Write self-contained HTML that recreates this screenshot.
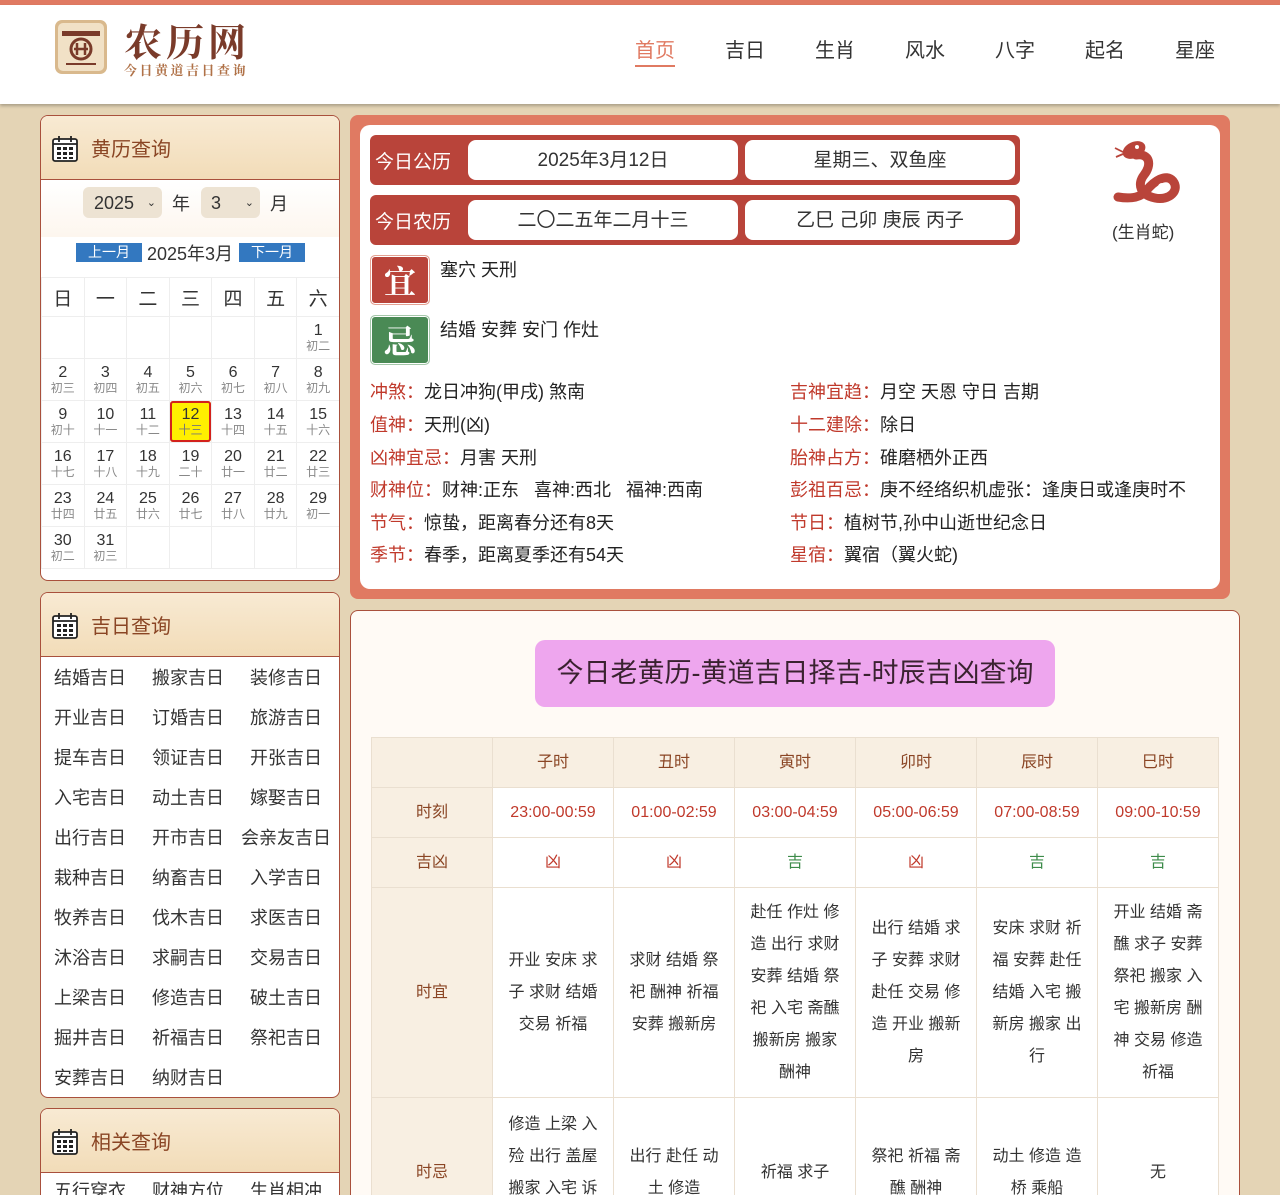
<!DOCTYPE html>
<html style="width:1280px;height:1195px;overflow:hidden"><head><meta charset="utf-8">
<style>
*{box-sizing:border-box;margin:0;padding:0}
body{width:1280px;height:1195px;overflow:hidden;background:#e4d4b5;font-family:"Liberation Sans","Noto Sans CJK SC",sans-serif;color:#333;position:relative}
.abs{position:absolute}
#top{left:0;top:0;width:1280px;height:5px;background:#e07a62}
#hdr{left:0;top:5px;width:1280px;height:99px;background:#fff;box-shadow:0 2px 3px rgba(0,0,0,.25)}
.nav{position:absolute;top:34px;font-size:20px;color:#333}
.box{position:absolute;left:40px;width:300px;background:#fff;border:1px solid #a9503c;border-radius:8px;overflow:hidden}
.bh{height:64px;background:linear-gradient(#f8ead3,#f2dcb8);border-bottom:1px solid #a9503c;position:relative}
.bh span{position:absolute;left:50px;top:17px;font-size:20px;color:#8a4524}
.ico{position:absolute;left:11px;top:20px;width:26px;height:26px}
.cal{position:absolute;left:0;top:161px;border-collapse:separate;border-spacing:1px;width:299px}
.cal td{width:41px;height:41px;background:#fff;text-align:center;vertical-align:middle;font-size:16px;line-height:16px;box-shadow:0 0 0 1px #eee}
.cal td small{display:block;font-size:12px;color:#888;line-height:14px}
.cal th{height:38px;font-weight:normal;font-size:19px;box-shadow:0 0 0 1px #eee}
.links{position:absolute;left:0;top:64px;width:300px}
.links div{height:40px;display:flex;align-items:center;font-size:18px;color:#333}
.links span{width:98px;text-align:center}
.bar{position:absolute;left:370px;width:650px;height:50px;background:#b9443a;border-radius:6px}
.bar b{position:absolute;left:5px;top:12px;font-weight:normal;color:#fff;font-size:19px}
.pill{position:absolute;top:5px;height:40px;width:270px;background:#fff;border-radius:8px;text-align:center;line-height:42px;font-size:19px}
.inf{position:absolute;font-size:18px;color:#222;white-space:nowrap}
.inf i{font-style:normal;color:#c0392b}
table.t{position:absolute;left:371px;top:737px;border-collapse:collapse;width:848px;font-size:16px}
.t td{border:1px solid #eadfd0;text-align:center;width:121px;padding:0 13px;color:#333;line-height:32px;background:#fff}
.t tr td:first-child{background:#f8efe2;color:#8a4524}
.t tr:first-child td{background:#f8efe2;color:#8a4524}
.r{color:#c0392b!important}.g{color:#3d8b4a!important}
</style></head><body>
<div class="abs" id="top"></div>
<div class="abs" id="hdr"></div>
<svg class="abs" style="left:54px;top:19px" width="54" height="56" viewBox="0 0 54 56">
<rect x="1" y="1" width="52" height="54" rx="7" fill="#d9b98d"/><rect x="4" y="4" width="46" height="48" rx="5" fill="#f1e1c6"/>
<rect x="8" y="12" width="38" height="5" fill="#7a3b2a"/><circle cx="27" cy="30" r="10" fill="none" stroke="#7a3b2a" stroke-width="3"/>
<path d="M23 24v12M31 24v12M20 30h14" stroke="#7a3b2a" stroke-width="2.5"/><rect x="12" y="44" width="30" height="2" fill="#7a3b2a"/></svg>
<div class="abs" style="left:124px;top:12px;font-size:38px;color:#7a3b2a;font-family:'Noto Serif CJK SC',serif;font-weight:bold;letter-spacing:4px">农历网</div>
<div class="abs" style="left:124px;top:60px;font-size:13px;color:#b07248;font-family:'Noto Serif CJK SC',serif;font-weight:bold;letter-spacing:2.5px">今日黄道吉日查询</div>
<div class="nav" style="left:635px;color:#e07a62">首页<div style="height:2px;background:#e07a62;margin-top:2px"></div></div>
<div class="nav" style="left:725px">吉日</div><div class="nav" style="left:815px">生肖</div><div class="nav" style="left:905px">风水</div><div class="nav" style="left:995px">八字</div><div class="nav" style="left:1085px">起名</div><div class="nav" style="left:1175px">星座</div>

<!-- box 1 -->
<div class="box" style="top:115px;height:466px">
<div class="bh"><svg class="ico" viewBox="0 0 26 26"><rect x="1" y="3" width="24" height="22" rx="2" fill="#fff" stroke="#222" stroke-width="1.8"/><path d="M7 0v6M19 0v6M1 8h24" stroke="#222" stroke-width="1.8"/><g fill="#222"><rect x="5" y="11" width="4" height="3"/><rect x="11" y="11" width="4" height="3"/><rect x="17" y="11" width="4" height="3"/><rect x="5" y="16" width="4" height="3"/><rect x="11" y="16" width="4" height="3"/><rect x="17" y="16" width="4" height="3"/><rect x="5" y="21" width="4" height="2"/><rect x="11" y="21" width="4" height="2"/><rect x="17" y="21" width="4" height="2"/></g></svg><span>黄历查询</span></div>
<div style="position:absolute;top:65px;left:0;width:300px;height:56px;background:linear-gradient(#fff,#fdf6ee)"></div>
<div style="position:absolute;left:42px;top:71px;width:79px;height:31px;background:#ede3d3;border-radius:6px;font-size:18px;line-height:33px;padding-left:11px">2025<span style="position:absolute;right:6px;font-size:11px">⌄</span></div>
<div style="position:absolute;left:131px;top:74px;font-size:18px">年</div>
<div style="position:absolute;left:160px;top:71px;width:59px;height:31px;background:#ede3d3;border-radius:6px;font-size:18px;line-height:33px;padding-left:10px">3<span style="position:absolute;right:6px;font-size:11px">⌄</span></div>
<div style="position:absolute;left:229px;top:74px;font-size:18px">月</div>
<div style="position:absolute;left:35px;top:127px;width:66px;height:19px;background:#3378c0;color:#fff;font-size:14px;text-align:center;line-height:19px">上一月</div>
<div style="position:absolute;left:106px;top:124px;font-size:18px">2025年3月</div>
<div style="position:absolute;left:198px;top:127px;width:66px;height:19px;background:#3378c0;color:#fff;font-size:14px;text-align:center;line-height:19px">下一月</div>
<table class="cal">
<tr><th>日</th><th>一</th><th>二</th><th>三</th><th>四</th><th>五</th><th>六</th></tr>
<tr><td></td><td></td><td></td><td></td><td></td><td></td><td>1<small>初二</small></td></tr>
<tr><td>2<small>初三</small></td><td>3<small>初四</small></td><td>4<small>初五</small></td><td>5<small>初六</small></td><td>6<small>初七</small></td><td>7<small>初八</small></td><td>8<small>初九</small></td></tr>
<tr><td>9<small>初十</small></td><td>10<small>十一</small></td><td>11<small>十二</small></td><td style="background:#ffef00;box-shadow:inset 0 0 0 2px #d3211c;border-radius:3px">12<small style="color:#777">十三</small></td><td>13<small>十四</small></td><td>14<small>十五</small></td><td>15<small>十六</small></td></tr>
<tr><td>16<small>十七</small></td><td>17<small>十八</small></td><td>18<small>十九</small></td><td>19<small>二十</small></td><td>20<small>廿一</small></td><td>21<small>廿二</small></td><td>22<small>廿三</small></td></tr>
<tr><td>23<small>廿四</small></td><td>24<small>廿五</small></td><td>25<small>廿六</small></td><td>26<small>廿七</small></td><td>27<small>廿八</small></td><td>28<small>廿九</small></td><td>29<small>初一</small></td></tr>
<tr><td>30<small>初二</small></td><td>31<small>初三</small></td><td></td><td></td><td></td><td></td><td></td></tr>
</table>
</div>

<!-- box 2 -->
<div class="box" style="top:592px;height:506px">
<div class="bh"><svg class="ico" viewBox="0 0 26 26"><rect x="1" y="3" width="24" height="22" rx="2" fill="#fff" stroke="#222" stroke-width="1.8"/><path d="M7 0v6M19 0v6M1 8h24" stroke="#222" stroke-width="1.8"/><g fill="#222"><rect x="5" y="11" width="4" height="3"/><rect x="11" y="11" width="4" height="3"/><rect x="17" y="11" width="4" height="3"/><rect x="5" y="16" width="4" height="3"/><rect x="11" y="16" width="4" height="3"/><rect x="17" y="16" width="4" height="3"/><rect x="5" y="21" width="4" height="2"/><rect x="11" y="21" width="4" height="2"/><rect x="17" y="21" width="4" height="2"/></g></svg><span>吉日查询</span></div>
<div class="links">
<div><span>结婚吉日</span><span>搬家吉日</span><span>装修吉日</span></div>
<div><span>开业吉日</span><span>订婚吉日</span><span>旅游吉日</span></div>
<div><span>提车吉日</span><span>领证吉日</span><span>开张吉日</span></div>
<div><span>入宅吉日</span><span>动土吉日</span><span>嫁娶吉日</span></div>
<div><span>出行吉日</span><span>开市吉日</span><span>会亲友吉日</span></div>
<div><span>栽种吉日</span><span>纳畜吉日</span><span>入学吉日</span></div>
<div><span>牧养吉日</span><span>伐木吉日</span><span>求医吉日</span></div>
<div><span>沐浴吉日</span><span>求嗣吉日</span><span>交易吉日</span></div>
<div><span>上梁吉日</span><span>修造吉日</span><span>破土吉日</span></div>
<div><span>掘井吉日</span><span>祈福吉日</span><span>祭祀吉日</span></div>
<div><span>安葬吉日</span><span>纳财吉日</span><span></span></div>
</div></div>

<!-- box 3 -->
<div class="box" style="top:1108px;height:120px">
<div class="bh"><svg class="ico" viewBox="0 0 26 26"><rect x="1" y="3" width="24" height="22" rx="2" fill="#fff" stroke="#222" stroke-width="1.8"/><path d="M7 0v6M19 0v6M1 8h24" stroke="#222" stroke-width="1.8"/><g fill="#222"><rect x="5" y="11" width="4" height="3"/><rect x="11" y="11" width="4" height="3"/><rect x="17" y="11" width="4" height="3"/><rect x="5" y="16" width="4" height="3"/><rect x="11" y="16" width="4" height="3"/><rect x="17" y="16" width="4" height="3"/><rect x="5" y="21" width="4" height="2"/><rect x="11" y="21" width="4" height="2"/><rect x="17" y="21" width="4" height="2"/></g></svg><span>相关查询</span></div>
<div class="links" style="top:66px"><div style="height:30px"><span>五行穿衣</span><span>财神方位</span><span>生肖相冲</span></div></div>
</div>

<!-- top right panel -->
<div class="abs" style="left:350px;top:115px;width:880px;height:484px;background:#e07a62;border-radius:8px"></div>
<div class="abs" style="left:360px;top:125px;width:860px;height:464px;background:#fff;border-radius:10px"></div>
<div class="bar" style="top:135px"><b>今日公历</b><div class="pill" style="left:98px">2025年3月12日</div><div class="pill" style="left:375px">星期三、双鱼座</div></div>
<div class="bar" style="top:195px"><b>今日农历</b><div class="pill" style="left:98px">二〇二五年二月十三</div><div class="pill" style="left:375px">乙巳 己卯 庚辰 丙子</div></div>
<svg class="abs" style="left:1110px;top:135px" width="75" height="75" viewBox="0 0 75 75">
<path d="M26 20 C40 18 42 30 34 40 C27 49 30 60 45 63 C60 66 70 55 63 46 C56 38 44 46 36 56 C30 63 20 64 8 62" fill="none" stroke="#b9443a" stroke-width="9" stroke-linecap="round"/>
<ellipse cx="24" cy="15" rx="12" ry="8" transform="rotate(-25 24 15)" fill="#b9443a"/>
<circle cx="52" cy="52" r="4" fill="#fff"/>
<circle cx="27" cy="12" r="2" fill="#fff"/><path d="M13 17 5 13M13 19 6 22" stroke="#b9443a" stroke-width="1.8"/></svg>
<div class="abs" style="left:1112px;top:218px;font-size:17px">(生肖蛇)</div>
<div class="abs" style="left:370px;top:255px;width:60px;height:50px;background:#b9443a;border:1px solid #e4a293;box-shadow:inset 0 0 0 1px #fff;border-radius:5px;color:#fff;font-size:32px;font-weight:bold;text-align:center;line-height:48px;font-family:'Noto Serif CJK SC',serif">宜</div>
<div class="abs" style="left:370px;top:315px;width:60px;height:50px;background:#4a8a55;border:1px solid #a6c8ab;box-shadow:inset 0 0 0 1px #fff;border-radius:5px;color:#fff;font-size:32px;font-weight:bold;text-align:center;line-height:48px;font-family:'Noto Serif CJK SC',serif">忌</div>
<div class="inf" style="left:440px;top:256px">塞穴 天刑</div>
<div class="inf" style="left:440px;top:316px">结婚 安葬 安门 作灶</div>
<div class="inf" style="left:370px;top:378px"><i>冲煞：</i>龙日冲狗(甲戌) 煞南</div>
<div class="inf" style="left:370px;top:411px"><i>值神：</i>天刑(凶)</div>
<div class="inf" style="left:370px;top:444px"><i>凶神宜忌：</i>月害 天刑</div>
<div class="inf" style="left:370px;top:476px"><i>财神位：</i>财神:正东 &nbsp;&nbsp;喜神:西北 &nbsp;&nbsp;福神:西南</div>
<div class="inf" style="left:370px;top:509px"><i>节气：</i>惊蛰，距离春分还有8天</div>
<div class="inf" style="left:370px;top:541px"><i>季节：</i>春季，距离夏季还有54天</div>
<div class="inf" style="left:790px;top:378px"><i>吉神宜趋：</i>月空 天恩 守日 吉期</div>
<div class="inf" style="left:790px;top:411px"><i>十二建除：</i>除日</div>
<div class="inf" style="left:790px;top:444px"><i>胎神占方：</i>碓磨栖外正西</div>
<div class="inf" style="left:790px;top:476px"><i>彭祖百忌：</i>庚不经络织机虚张：逢庚日或逢庚时不</div>
<div class="inf" style="left:790px;top:509px"><i>节日：</i>植树节,孙中山逝世纪念日</div>
<div class="inf" style="left:790px;top:541px"><i>星宿：</i>翼宿（翼火蛇)</div>

<!-- lower panel -->
<div class="abs" style="left:350px;top:610px;width:890px;height:600px;background:#fffaf5;border:1px solid #a9503c;border-radius:8px"></div>
<div class="abs" style="left:535px;top:640px;width:520px;height:67px;background:#eea6ee;border-radius:10px;text-align:center;line-height:67px;font-size:27px;color:#3a2230">今日老黄历-黄道吉日择吉-时辰吉凶查询</div>
<table class="t">
<tr style="height:50px"><td></td><td>子时</td><td>丑时</td><td>寅时</td><td>卯时</td><td>辰时</td><td>巳时</td></tr>
<tr style="height:50px"><td>时刻</td><td class="r">23:00-00:59</td><td class="r">01:00-02:59</td><td class="r">03:00-04:59</td><td class="r">05:00-06:59</td><td class="r">07:00-08:59</td><td class="r">09:00-10:59</td></tr>
<tr style="height:50px"><td>吉凶</td><td class="r">凶</td><td class="r">凶</td><td class="g">吉</td><td class="r">凶</td><td class="g">吉</td><td class="g">吉</td></tr>
<tr style="height:210px"><td>时宜</td><td>开业 安床 求子 求财 结婚 交易 祈福</td><td>求财 结婚 祭祀 酬神 祈福 安葬 搬新房</td><td>赴任 作灶 修造 出行 求财 安葬 结婚 祭祀 入宅 斋醮 搬新房 搬家 酬神</td><td>出行 结婚 求子 安葬 求财 赴任 交易 修造 开业 搬新房</td><td>安床 求财 祈福 安葬 赴任 结婚 入宅 搬新房 搬家 出行</td><td>开业 结婚 斋醮 求子 安葬 祭祀 搬家 入宅 搬新房 酬神 交易 修造 祈福</td></tr>
<tr style="height:150px"><td>时忌</td><td>修造 上梁 入殓 出行 盖屋 搬家 入宅 诉讼</td><td>出行 赴任 动土 修造</td><td>祈福 求子</td><td>祭祀 祈福 斋醮 酬神</td><td>动土 修造 造桥 乘船</td><td>无</td></tr>
</table>
</body></html>
